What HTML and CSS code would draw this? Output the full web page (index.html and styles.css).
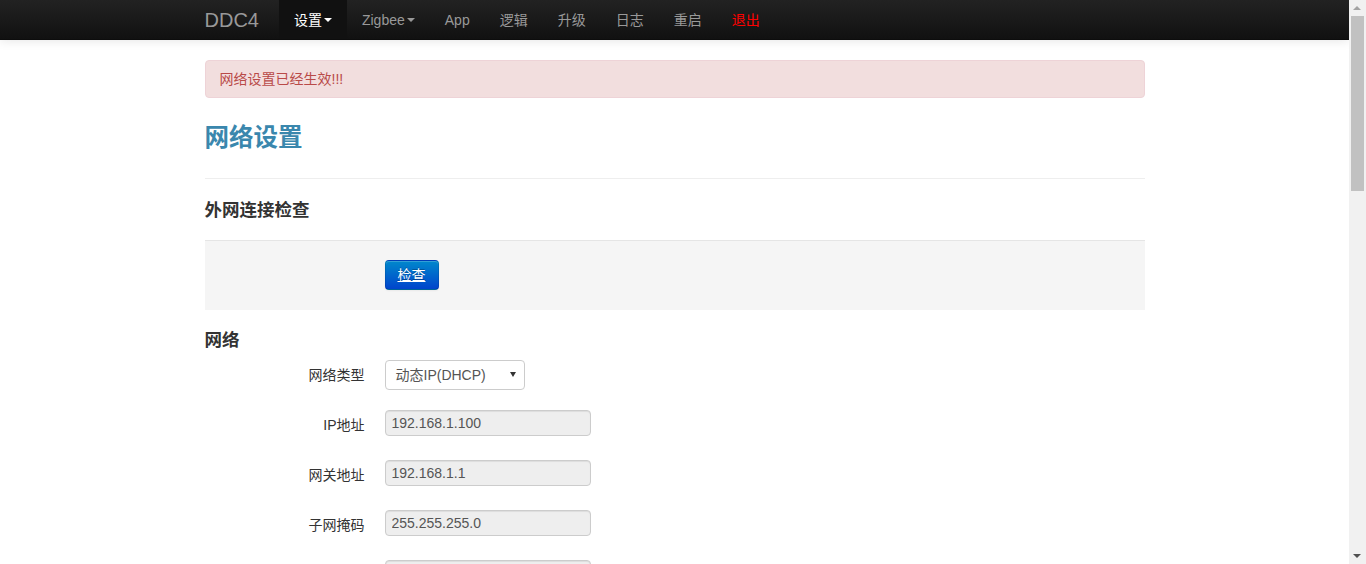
FILE: index.html
```html
<!DOCTYPE html>
<html lang="zh-CN">
<head>
<meta charset="utf-8">
<title>网络设置</title>
<link rel="stylesheet" href="styles.css">
</head>
<body>
<div class="navbar">
  <div class="container nav-inner">
    <a class="brand" href="#">DDC4</a>
    <ul class="nav">
      <li class="active"><a href="#">设置<b class="caret"></b></a></li>
      <li><a href="#">Zigbee<b class="caret"></b></a></li>
      <li><a href="#">App</a></li>
      <li><a href="#">逻辑</a></li>
      <li><a href="#">升级</a></li>
      <li><a href="#">日志</a></li>
      <li><a href="#">重启</a></li>
      <li><a href="#" class="logout">退出</a></li>
    </ul>
  </div>
</div>
<div class="container main">
  <div class="alert">网络设置已经生效!!!</div>
  <h2 class="page-title">网络设置</h2>
  <hr class="divider">
  <h4 class="section-title">外网连接检查</h4>
  <div class="form-actions">
    <a class="btn-primary" href="#">检查</a>
  </div>
  <h4 class="section-title">网络</h4>
  <div class="form-horizontal">
    <div class="control-group">
      <label class="control-label">网络类型</label>
      <div class="controls">
        <div class="select-box">
          <span>动态IP(DHCP)</span>
          <span class="select-arrow"></span>
        </div>
      </div>
    </div>
    <div class="control-group">
      <label class="control-label">IP地址</label>
      <div class="controls"><input class="input" type="text" value="192.168.1.100" disabled></div>
    </div>
    <div class="control-group">
      <label class="control-label">网关地址</label>
      <div class="controls"><input class="input" type="text" value="192.168.1.1" disabled></div>
    </div>
    <div class="control-group">
      <label class="control-label">子网掩码</label>
      <div class="controls"><input class="input" type="text" value="255.255.255.0" disabled></div>
    </div>
    <div class="control-group">
      <label class="control-label"></label>
      <div class="controls"><input class="input" type="text" value="" disabled></div>
    </div>
  </div>
</div>
<div class="scrollbar">
  <span class="sb-up"></span>
  <span class="sb-thumb"></span>
  <span class="sb-down"></span>
</div>
</body>
</html>
```
FILE: styles.css
```css
html, body {
  margin: 0;
  padding: 0;
}
body {
  margin-right: 17px;
  font-family: "Liberation Sans", "Noto Sans CJK SC", sans-serif;
  font-size: 14px;
  line-height: 20px;
  color: #333;
  background: #fff;
}
.container {
  width: 940px;
  margin: 0 auto;
}
.navbar {
  height: 40px;
  background: linear-gradient(to bottom, #222222, #111111);
  border-bottom: 1px solid #0d0d0d;
  box-sizing: border-box;
  box-shadow: 0 1px 10px rgba(0,0,0,0.1);
  position: relative;
  z-index: 2;
}
.nav-inner {
  display: flex;
  align-items: stretch;
  height: 40px;
}
.brand {
  display: block;
  margin-left: -20px;
  padding: 10px 20px 10px;
  font-size: 20px;
  line-height: 20px;
  color: #999;
  text-decoration: none;
}
.nav {
  display: flex;
  list-style: none;
  margin: 0;
  padding: 0;
}
.nav li a {
  display: flex;
  align-items: center;
  height: 39px;
  box-sizing: border-box;
  padding: 0 15px 0;
  color: #999;
  text-decoration: none;
  font-size: 14px;
  line-height: 20px;
}
.nav li.active a {
  background: #111;
  color: #fff;
}
.nav li a.logout {
  color: #ff0000;
}
.caret {
  display: inline-block;
  width: 0;
  height: 0;
  margin-left: 2px;
  margin-top: 1px;
  border-top: 4px solid #999;
  border-left: 4px solid transparent;
  border-right: 4px solid transparent;
}
.nav li.active .caret {
  border-top-color: #fff;
}
.main {
  padding-top: 20px;
}
.alert {
  padding: 8px 35px 8px 14px;
  margin-bottom: 20px;
  background: #f2dede;
  border: 1px solid #eed3d7;
  border-radius: 4px;
  color: #b94a48;
}
.page-title {
  margin: 0;
  font-size: 24.5px;
  line-height: 40px;
  font-weight: bold;
  color: #3a87ad;
}
.divider {
  margin: 20px 0;
  border: 0;
  border-top: 1px solid #eee;
  border-bottom: 1px solid #fff;
}
.section-title {
  margin: 0;
  font-size: 17.5px;
  line-height: 20px;
  font-weight: bold;
  color: #333;
}
.form-actions {
  margin: 20px 0;
  padding: 19px 20px 20px 180px;
  background: #f5f5f5;
  border-top: 1px solid #e5e5e5;
}
.btn-primary {
  display: inline-block;
  padding: 4px 12px;
  font-size: 14px;
  line-height: 20px;
  color: #fff;
  text-decoration: underline;
  text-shadow: 0 -1px 0 rgba(0,0,0,0.25);
  background: linear-gradient(to bottom, #0088cc, #0044cc);
  border: 1px solid;
  border-color: rgba(0,0,0,0.1) rgba(0,0,0,0.1) rgba(0,0,0,0.25);
  border-radius: 4px;
  box-shadow: inset 0 1px 0 rgba(255,255,255,0.2), 0 1px 2px rgba(0,0,0,0.05);
}
.form-horizontal {
  margin-top: 10px;
}
.control-group {
  display: flex;
  height: 30px;
  margin-bottom: 20px;
}
.control-label {
  width: 160px;
  padding-top: 5px;
  text-align: right;
  line-height: 20px;
  color: #333;
}
.controls {
  margin-left: 20px;
}
.select-box {
  width: 140px;
  height: 30px;
  box-sizing: border-box;
  border: 1px solid #ccc;
  border-radius: 4px;
  background: #fff;
  display: flex;
  align-items: center;
  justify-content: space-between;
  padding: 0 8px 0 10px;
  color: #555;
  font-size: 14px;
}
.select-arrow {
  width: 0;
  height: 0;
  border-top: 5px solid #333;
  border-left: 3px solid transparent;
  border-right: 3px solid transparent;
  margin-top: -1px;
}
.input {
  display: block;
  width: 206px;
  height: 26px;
  box-sizing: border-box;
  padding: 2px 6px;
  margin: 0;
  font-family: "Liberation Sans", "Noto Sans CJK SC", sans-serif;
  font-size: 14px;
  line-height: 20px;
  color: #555;
  background: #eee;
  border: 1px solid #ccc;
  border-radius: 4px;
  box-shadow: inset 0 1px 1px rgba(0,0,0,0.075);
}
.scrollbar {
  position: fixed;
  top: 0;
  right: 0;
  bottom: 0;
  width: 17px;
  background: #f1f1f1;
  z-index: 5;
}
.sb-up {
  position: absolute;
  top: 6px;
  left: 4px;
  width: 0;
  height: 0;
  border-bottom: 4px solid #a3a3a3;
  border-left: 4px solid transparent;
  border-right: 4px solid transparent;
}
.sb-thumb {
  position: absolute;
  top: 16px;
  left: 2px;
  width: 13px;
  height: 175px;
  background: #c1c1c1;
}
.sb-down {
  position: absolute;
  bottom: 6px;
  left: 4px;
  width: 0;
  height: 0;
  border-top: 4px solid #505050;
  border-left: 4px solid transparent;
  border-right: 4px solid transparent;
}
```
